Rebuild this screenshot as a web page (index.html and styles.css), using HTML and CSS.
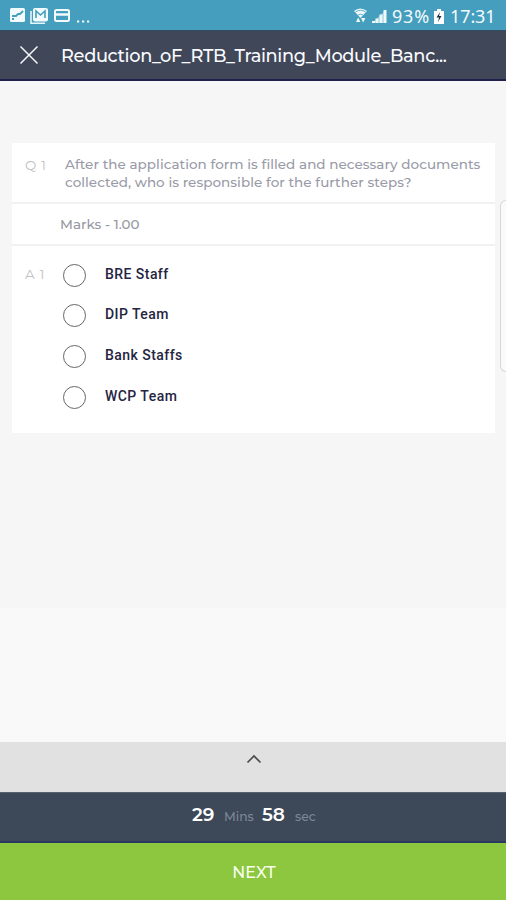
FILE: index.html
```html
<!DOCTYPE html>
<html lang="en">
<head>
<meta charset="utf-8">
<meta name="viewport" content="width=device-width, initial-scale=1">
<title>Training Module</title>
<link rel="stylesheet" href="styles.css">
</head>
<body>
<div class="app">
  <div class="status">
    <svg class="status-left" width="82" height="18" viewBox="0 0 82 18" fill="none">
      <rect x="1" y="0" width="15" height="14" rx="1.500" fill="#f1fafc"/>
      <path d="M3 8h4l2-2h2l3-3M3 11h2" stroke="#459ebd" stroke-width="1.8"/>
      <path d="M22 3v12.200h14" stroke="#e5f5f9" stroke-width="1.600"/>
      <rect x="24" y="0" width="15" height="13.500" rx="2" fill="#f1fafc"/>
      <path d="M27 10V3l4.500 4L36 3v7" stroke="#459ebd" stroke-width="1.600"/>
      <rect x="46" y="2" width="14" height="11" rx="1.500" stroke="#f1fafc" stroke-width="2"/>
      <path d="M46 6.500h14" stroke="#f1fafc" stroke-width="2.500"/>
      <path d="M68 13.500h2.200M73 13.500h2.200M78 13.500h2.200" stroke="#f1fafc" stroke-width="2.200"/>
    </svg>
    <div class="status-right">
      <svg class="signals" width="34" height="18" viewBox="0 0 34 18" fill="#eef9fc">
        <path d="M0 3Q6 -2 13 3L6.500 10Z"/>
        <path d="M1.500 4Q6.500 0.500 11.500 4M4 7q2.500-1.500 5 0" fill="none" stroke="#459ebd" stroke-width=".8"/>
        <path d="M2 14l2.200-4.500L6.400 14zM7 10h4.400l-2.200 4.500z"/>
        <path d="M18 13h3v2h-3zM21.500 10.500h3V15h-3zM25.500 6.500h3V15h-3zM29.500 2h3v13h-3z"/>
        <path d="M18 15L32 2v13z" opacity=".45"/>
      </svg>
      <span class="percent">93%</span>
      <svg class="battery" width="10" height="16" viewBox="0 0 10 16"><path d="M3 0h4v2h3v13H0V2h3z" fill="#fff"/><path d="M6 3L2.500 8.500H5L4 13l3.500-6H5z" fill="#17333d"/></svg>
      <span class="clock">17:31</span>
    </div>
  </div>
  <header class="bar">
    <svg class="close" width="20" height="20" viewBox="0 0 20 20"><path d="M1.500 1.500l17 17M18.500 1.500l-17 17" stroke="#f5f7fa" stroke-width="1.500"/></svg>
    <h1 class="title">Reduction_oF_RTB_Training_Module_Banc...</h1>
  </header>
  <main class="content">
    <section class="card">
      <div class="question">
        <span class="tag">Q 1</span>
        <p class="question-text"><span class="line">After the application form is filled and necessary documents</span><span class="line">collected, who is responsible for the further steps?</span></p>
      </div>
      <div class="marks"><span>Marks - 1.00</span></div>
      <div class="answers">
        <span class="tag">A 1</span>
        <ul class="options">
          <li><i class="radio"></i><span>BRE Staff</span></li>
          <li><i class="radio"></i><span>DIP Team</span></li>
          <li><i class="radio"></i><span>Bank Staffs</span></li>
          <li><i class="radio"></i><span>WCP Team</span></li>
        </ul>
      </div>
    </section>
    <div class="edge-handle"></div>
  </main>
  <div class="drawer"><svg width="16" height="10" viewBox="0 0 16 10"><path d="M1.500 8.500L8 2l6.500 6.500" fill="none" stroke="#4b4b4b" stroke-width="1.700"/></svg></div>
  <div class="timer"><b class="minutes">29</b><span class="mins">Mins</span><b class="seconds">58</b><span class="sec">sec</span></div>
  <div class="next">NEXT</div>
</div>
</body>
</html>
```
FILE: styles.css
```css
* { box-sizing: border-box; }
body { margin: 0; font-family: Montserrat, Inter, sans-serif; }
.app { width: 506px; height: 900px; display: flex; flex-direction: column; overflow: hidden; }
.status { height: 30px; flex: none; background: #459ebd; display: flex; justify-content: space-between; padding: 8px 10px 0 9px; }
.status-right { display: flex; font: 18px/18px "Noto Sans", sans-serif; color: #f3fbfd; margin-top: -1px; }
.signals { margin-right: 4px; margin-top: 1px; }
.percent { width: 39px; letter-spacing: .8px; white-space: nowrap; }
.battery { margin: 2px 6px 0 3px; }
.clock { width: 46px; letter-spacing: -.1px; white-space: nowrap; }
.bar { height: 51px; flex: none; background: #404759; border-top: 1px solid #354c60; border-bottom: 2px solid #20204b; display: flex; align-items: center; padding-left: 19px; }
.close { margin-right: 22px; }
.title { margin: 2px 0 0; font-size: 17.8px; line-height: 24px; letter-spacing: -.34px; font-weight: 500; color: #fafbff; white-space: nowrap; }
.content { position: relative; height: 661px; flex: none; padding: 62px 11px 0 12px; background: linear-gradient(#f6f6f6 0 527px, #f9f9f9 527px); }
.card { height: 290px; background: #fff; }
.question { height: 61px; display: flex; border-bottom: 2px solid #f1f1f1; padding: 13px 0 0 13px; }
.tag { width: 40px; flex: none; font-size: 13.5px; line-height: 18px; color: #bfbfc3; letter-spacing: .6px; }
.question-text { margin: 0; font-size: 13.5px; font-weight: 500; line-height: 17.5px; letter-spacing: .04px; color: #999ba7; }
.line { display: block; white-space: nowrap; }
.marks { height: 42px; border-bottom: 2px solid #f1f1f1; padding: 12px 0 0 48px; font-size: 13.5px; font-weight: 500; line-height: 17px; color: #9899a4; }
.answers { display: flex; padding: 19px 0 0 13px; }
.answers .tag { width: 38px; }
.options { margin: -.5px 0 0; padding: 0; list-style: none; font: 500 14px/18px Roboto, sans-serif; letter-spacing: .45px; color: #25253f; }
.options li { height: 40.7px; display: flex; }
.radio { width: 23px; height: 23px; margin: -1px 19px 0 0; border: 1.5px solid #666; border-radius: 50%; }
.edge-handle { position: absolute; top: 119px; left: 500px; width: 6px; height: 172px; border: 1px solid #d8d8d8; border-right: 0; border-radius: 6px 0 0 6px; background: #fafafa; }
.drawer { height: 50px; flex: none; background: #e1e1e1; display: flex; justify-content: center; padding: 12px 0 0 2px; }
.timer { height: 51px; flex: none; background: #3d4859; border-top: 1px solid #58616c; border-bottom: 2px solid #2b3860; display: flex; align-items: baseline; padding: 9px 0 0 192px; color: #fff; line-height: 26px; }
.timer b { font-size: 18.5px; font-weight: 600; }
.timer span { font-size: 12.3px; font-weight: 500; color: #7f8794; }
.minutes { width: 32px; }
.mins { width: 38px; }
.seconds { width: 33px; }
.next { height: 57px; flex: none; background: #8dc63f; color: #f8fff0; font-size: 16px; font-weight: 500; line-height: 59px; text-align: center; padding-left: 2px; }
```
